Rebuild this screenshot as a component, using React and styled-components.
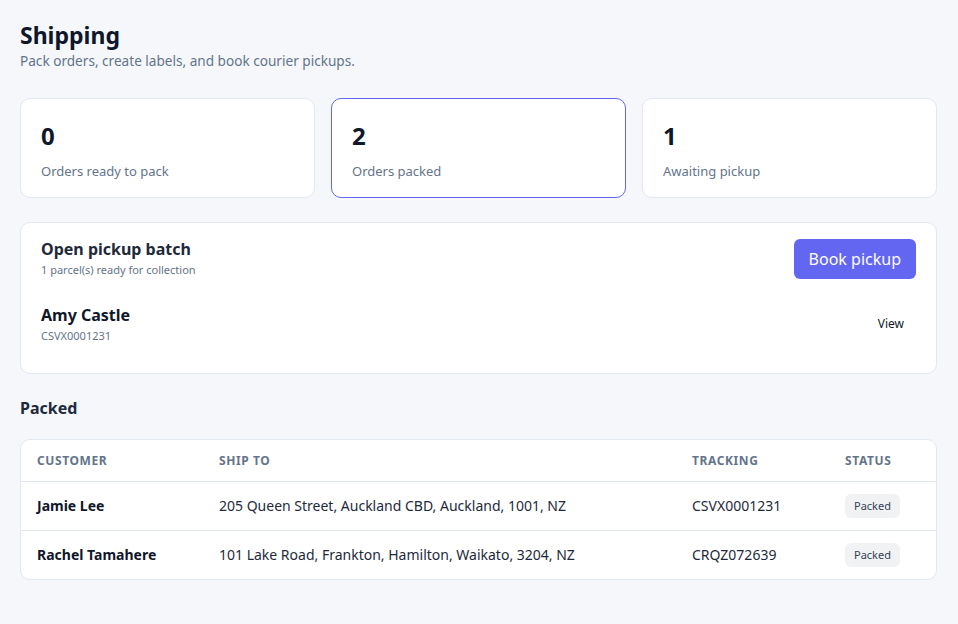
import React from 'react';
import styled, { createGlobalStyle } from 'styled-components';

const GlobalStyle = createGlobalStyle`
  * { box-sizing: border-box; }
  body {
    margin: 0;
    background: #f5f7fb;
    font-family: "Noto Sans", "Open Sans", sans-serif;
    color: #0f172a;
  }
`;

const stats = [
  { value: 0, label: 'Orders ready to pack' },
  { value: 2, label: 'Orders packed', active: true },
  { value: 1, label: 'Awaiting pickup' },
];

const packed = [
  {
    customer: 'Jamie Lee',
    shipTo: '205 Queen Street, Auckland CBD, Auckland, 1001, NZ',
    tracking: 'CSVX0001231',
    status: 'Packed',
  },
  {
    customer: 'Rachel Tamahere',
    shipTo: '101 Lake Road, Frankton, Hamilton, Waikato, 3204, NZ',
    tracking: 'CRQZ072639',
    status: 'Packed',
  },
];

const columns = [
  { key: 'customer', label: 'Customer', width: 182 },
  { key: 'shipTo', label: 'Ship to' },
  { key: 'tracking', label: 'Tracking', width: 153 },
  { key: 'status', label: 'Status', width: 107 },
];

const App = () => {
  return (
    <Page>
      <GlobalStyle />
      <Header>
        <Title>Shipping</Title>
        <Subtitle>Pack orders, create labels, and book courier pickups.</Subtitle>
      </Header>

      <StatGrid>
        {stats.map((s) => (
          <StatCard key={s.label} $active={s.active}>
            <StatValue>{s.value}</StatValue>
            <StatLabel>{s.label}</StatLabel>
          </StatCard>
        ))}
      </StatGrid>

      <BatchCard>
        <BatchTop>
          <div>
            <BatchTitle>Open pickup batch</BatchTitle>
            <BatchMeta>1 parcel(s) ready for collection</BatchMeta>
          </div>
          <PrimaryButton>Book pickup</PrimaryButton>
        </BatchTop>
        <ParcelRow>
          <div>
            <ParcelName>Amy Castle</ParcelName>
            <ParcelTracking>CSVX0001231</ParcelTracking>
          </div>
          <LinkButton>View</LinkButton>
        </ParcelRow>
      </BatchCard>

      <SectionTitle>Packed</SectionTitle>

      <TableCard>
        <Table>
          <colgroup>
            {columns.map((c) => (
              <col key={c.key} width={c.width} />
            ))}
          </colgroup>
          <thead>
            <tr>
              {columns.map((c) => (
                <Th key={c.key}>{c.label}</Th>
              ))}
            </tr>
          </thead>
          <tbody>
            {packed.map((row) => (
              <tr key={row.tracking}>
                <Td $strong>{row.customer}</Td>
                <Td>{row.shipTo}</Td>
                <Td>{row.tracking}</Td>
                <Td>
                  <Badge>{row.status}</Badge>
                </Td>
              </tr>
            ))}
          </tbody>
        </Table>
      </TableCard>
    </Page>
  );
};

const Page = styled.main`
  padding: 20px 21px 40px 20px;
`;

const Header = styled.header`
  margin-bottom: 27px;
`;

const Title = styled.h1`
  margin: 0;
  font-size: 23px;
  line-height: 31px;
  font-weight: 700;
  color: #0f172a;
`;

const Subtitle = styled.p`
  margin: 0;
  font-size: 13.6px;
  line-height: 20px;
  color: #64748b;
`;

const StatGrid = styled.div`
  display: grid;
  grid-template-columns: repeat(3, 1fr);
  gap: 16px;
  margin-bottom: 24px;
`;

const StatCard = styled.div`
  background: #fff;
  border: 1px solid ${(p) => (p.$active ? '#6366f1' : '#e2e8f0')};
  border-radius: 10px;
  padding: 21px 20px 0;
  height: 100px;
`;

const StatValue = styled.div`
  font-size: 24px;
  line-height: 32px;
  font-weight: 700;
  color: #0f172a;
  margin-bottom: 10px;
`;

const StatLabel = styled.div`
  font-size: 13px;
  line-height: 18px;
  color: #64748b;
`;

const BatchCard = styled.section`
  background: #fff;
  border: 1px solid #e2e8f0;
  border-radius: 10px;
  padding: 16px 20px 20px;
  margin-bottom: 22px;
`;

const BatchTop = styled.div`
  display: flex;
  justify-content: space-between;
  align-items: flex-start;
`;

const BatchTitle = styled.h2`
  margin: 0;
  font-size: 16px;
  line-height: 20px;
  font-weight: 700;
  color: #1e293b;
`;

const BatchMeta = styled.div`
  margin-top: 4px;
  font-size: 11px;
  line-height: 14px;
  color: #64748b;
`;

const PrimaryButton = styled.button`
  margin-top: 0;
  height: 40px;
  padding: 0 15px;
  border: none;
  border-radius: 6px;
  background: #6366f1;
  color: #fff;
  font-family: inherit;
  font-size: 16px;
  cursor: pointer;
`;

const ParcelRow = styled.div`
  display: flex;
  justify-content: space-between;
  align-items: center;
  padding: 25px 0 10px;
`;

const ParcelName = styled.div`
  font-size: 16px;
  line-height: 22px;
  font-weight: 700;
  color: #0f172a;
`;

const ParcelTracking = styled.div`
  font-size: 11px;
  line-height: 14px;
  color: #64748b;
  margin-top: 3px;
`;

const LinkButton = styled.button`
  background: none;
  border: none;
  padding: 6px 12px;
  font-family: inherit;
  font-size: 12px;
  color: #0f172a;
  cursor: pointer;
`;

const SectionTitle = styled.h3`
  margin: 0 0 19px;
  font-size: 16px;
  line-height: 24px;
  font-weight: 700;
  color: #1e293b;
`;

const TableCard = styled.div`
  background: #fff;
  border: 1px solid #e2e8f0;
  border-radius: 10px;
  overflow: hidden;
`;

const Table = styled.table`
  width: 100%;
  border-collapse: collapse;
  table-layout: fixed;
`;

const Th = styled.th`
  text-align: left;
  padding: 0 16px;
  height: 41px;
  font-size: 12px;
  font-weight: 700;
  letter-spacing: 0.05em;
  text-transform: uppercase;
  color: #64748b;
  border-bottom: 1px solid #e2e8f0;
`;

const Td = styled.td`
  padding: 0 16px;
  height: 49px;
  font-size: 14px;
  font-weight: ${(p) => (p.$strong ? 700 : 400)};
  color: ${(p) => (p.$strong ? '#0f172a' : '#1e293b')};
  tr:not(:last-child) > & {
    border-bottom: 1px solid #e2e8f0;
  }
`;

const Badge = styled.span`
  display: inline-block;
  padding: 5px 9px;
  border-radius: 6px;
  background: #f1f2f4;
  font-size: 11px;
  line-height: 14px;
  color: #334155;
`;

export default App;
